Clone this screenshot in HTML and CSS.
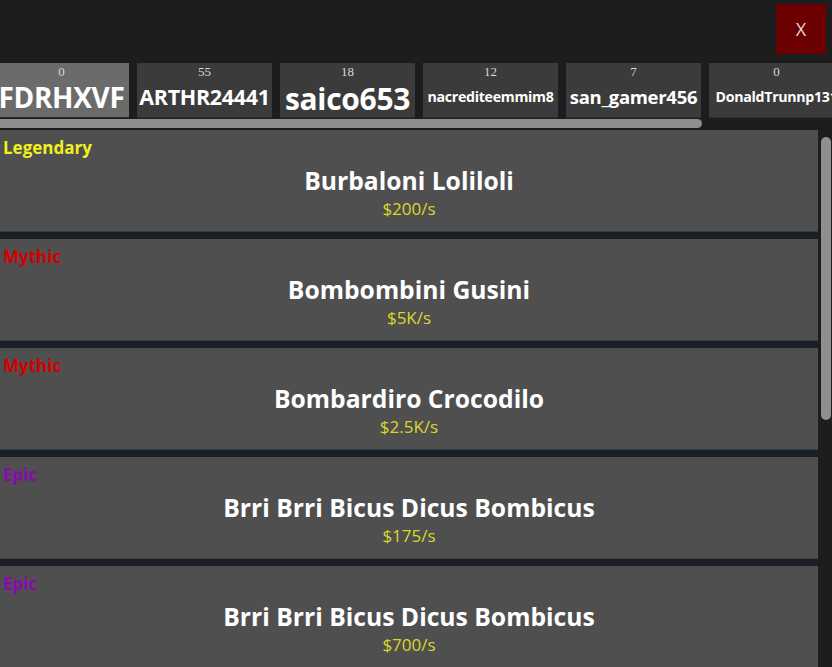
FILE: index.html
```html
<!DOCTYPE html>
<html>
<head>
<meta charset="utf-8">
<link rel="stylesheet" href="styles.css">
</head>
<body>
<div class="top">
  <div class="close">X</div>
</div>
<div class="tabs">
  <div class="tab active"><div class="count">0</div><div class="name n-fd">FDRHXVF</div></div>
  <div class="tab"><div class="count">55</div><div class="name n-ar">ARTHR24441</div></div>
  <div class="tab"><div class="count">18</div><div class="name n-sa">saico653</div></div>
  <div class="tab"><div class="count">12</div><div class="name n-na">nacrediteemmim8</div></div>
  <div class="tab"><div class="count">7</div><div class="name n-sg">san_gamer456</div></div>
  <div class="tab"><div class="count">0</div><div class="name n-na">DonaldTrunnp131</div></div>
</div>
<div class="hscroll"><div class="hthumb"></div></div>
<div class="main">
  <div class="list">
    <div class="card">
      <div class="rarity legendary">Legendary</div>
      <div class="title">Burbaloni Loliloli</div>
      <div class="price">$200/s</div>
    </div>
    <div class="card">
      <div class="rarity mythic">Mythic</div>
      <div class="title">Bombombini Gusini</div>
      <div class="price">$5K/s</div>
    </div>
    <div class="card">
      <div class="rarity mythic">Mythic</div>
      <div class="title">Bombardiro Crocodilo</div>
      <div class="price">$2.5K/s</div>
    </div>
    <div class="card">
      <div class="rarity epic">Epic</div>
      <div class="title">Brri Brri Bicus Dicus Bombicus</div>
      <div class="price">$175/s</div>
    </div>
    <div class="card">
      <div class="rarity epic">Epic</div>
      <div class="title">Brri Brri Bicus Dicus Bombicus</div>
      <div class="price">$700/s</div>
    </div>
  </div>
  <div class="vscroll"><div class="vthumb"></div></div>
</div>
</body>
</html>
```
FILE: styles.css
```css
html, body {
  margin: 0;
  padding: 0;
}
body {
  width: 832px;
  height: 667px;
  overflow: hidden;
  background: #1d1d1d;
  font-family: "Open Sans", "Lato", sans-serif;
  color: #fff;
}
.top {
  height: 63px;
  display: flex;
  justify-content: flex-end;
  align-items: flex-start;
}
.close {
  margin-top: 4px;
  margin-right: 6px;
  width: 50px;
  height: 50px;
  background: #6a0000;
  color: #f3d0d0;
  font-size: 18px;
  display: flex;
  align-items: center;
  justify-content: center;
}
.tabs {
  display: flex;
  gap: 8px;
  margin-left: -6px;
  height: 55px;
}
.tab {
  flex: 0 0 135px;
  height: 55px;
  background: #3b3b3b;
  box-shadow: inset 0 -1px 0 #2a2e31;
  display: flex;
  flex-direction: column;
  align-items: center;
  overflow: hidden;
  white-space: nowrap;
}
.tab.active {
  background: #6b6b6b;
}
.count {
  font-family: "Liberation Serif", serif;
  font-size: 13px;
  color: #d8d8d8;
  line-height: 12px;
  margin-top: 3px;
}
.name {
  font-weight: 700;
  flex: 1;
  display: flex;
  align-items: center;
  line-height: 0.8;
  letter-spacing: -0.3px;
  padding-bottom: 2px;
}
.n-fd { font-size: 28px; }
.n-ar { font-size: 21.5px; }
.n-sa { font-size: 30px; line-height: 0.7; padding-top: 2px; }
.n-na { font-size: 14.2px; }
.n-sg { font-size: 18.5px; }
.hscroll {
  height: 11px;
  padding-top: 1px;
}
.hthumb {
  width: 702px;
  height: 9px;
  background: #8e8e8e;
  border-radius: 0 5px 5px 0;
}
.main {
  display: flex;
}
.list {
  width: 818px;
  display: flex;
  flex-direction: column;
  gap: 8px;
  background: #1c2024;
}
.card {
  height: 101px;
  background: #4f4f4f;
  box-shadow: 0 1px 0 #33404a;
  display: flex;
  flex-direction: column;
  align-items: center;
}
.rarity {
  align-self: flex-start;
  margin-left: 3px;
  margin-top: 7px;
  font-size: 17px;
  font-weight: 700;
  line-height: 22px;
}
.legendary { color: #f0f01e; }
.mythic { color: #d40000; }
.epic { color: #8d07b0; }
.title {
  font-size: 24.7px;
  font-weight: 700;
  line-height: 30px;
  margin-top: 7px;
}
.price {
  font-size: 17px;
  color: #d9d92a;
  line-height: 22px;
  margin-top: 2px;
}
.vscroll {
  width: 14px;
  padding-top: 7px;
}
.vthumb {
  margin-left: 3px;
  width: 10px;
  height: 283px;
  background: #8f8f8f;
  border-radius: 5px;
}
```
